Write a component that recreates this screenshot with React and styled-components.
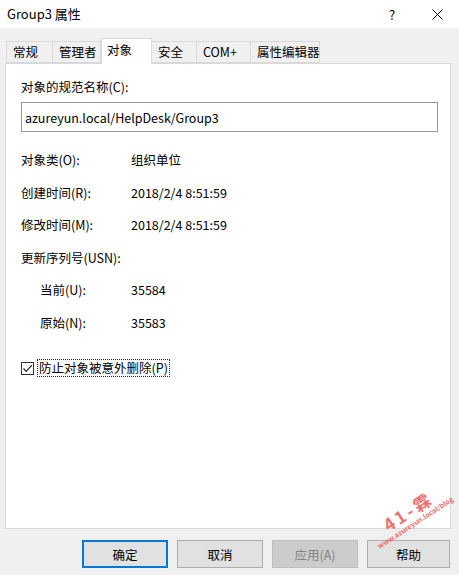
import React from "react";
import styled, { createGlobalStyle } from "styled-components";

const Global = createGlobalStyle`
  html, body { margin: 0; padding: 0; background: #f0f0f0; }
  body { font-family: "Noto Sans CJK SC", "Noto Sans", sans-serif; font-size: 12.5px; color: #000; }
  * { box-sizing: border-box; }
`;

const Window = styled.div`
  position: relative;
  width: 459px;
  height: 575px;
  background: #f0f0f0;
  display: flex;
  flex-direction: column;
  overflow: hidden;
`;

const TitleBar = styled.div`
  height: 28px;
  background: #fff;
  display: flex;
  align-items: center;
  padding-left: 7px;
`;

const Title = styled.div`
  flex: 1;
  font-size: 13px;
  line-height: 18px;
`;

const TitleButton = styled.div`
  width: ${p => p.$w}px;
  height: 28px;
  display: flex;
  align-items: center;
  justify-content: center;
  font-size: 13px;
`;

const TabStrip = styled.div`
  margin-top: 10px;
  height: 25px;
  padding-left: 6px;
  display: flex;
  align-items: flex-end;
  position: relative;
  z-index: 1;
`;

const Tab = styled.div`
  width: ${p => p.$w}px;
  height: ${p => (p.$active ? 26 : 22)}px;
  margin-bottom: ${p => (p.$active ? -1 : 0)}px;
  background: ${p => (p.$active ? "#fff" : "#f0f0f0")};
  border: 1px solid #d9d9d9;
  border-bottom: ${p => (p.$active ? "none" : "1px solid #d9d9d9")};
  border-left: ${p => (p.$first || p.$active ? "1px solid #d9d9d9" : "none")};
  padding-left: ${p => p.$pl}px;
  display: flex;
  align-items: ${p => (p.$active ? "flex-start" : "center")};
  padding-top: ${p => (p.$active ? 2 : 0)}px;
  line-height: 18px;
  white-space: nowrap;
`;

const Panel = styled.div`
  margin: 0 8px 0 5px;
  height: 466px;
  background: #fff;
  border: 1px solid #d9d9d9;
  padding: 14px 12px 0 15px;
  display: flex;
  flex-direction: column;
`;

const Label = styled.div`
  line-height: 18px;
  height: 18px;
  white-space: nowrap;
`;

const TextBox = styled.div`
  margin-top: 6px;
  height: 30px;
  border: 1px solid #9a9a9a;
  padding-left: 3px;
  display: flex;
  align-items: center;
  background: #fff;
`;

const InfoGrid = styled.div`
  margin-top: 12px;
  display: grid;
  grid-template-columns: 110px 1fr;
  grid-auto-rows: 32.5px;
  align-items: center;
`;

const Key = styled.div`
  padding-left: ${p => (p.$indent ? 19 : 0)}px;
  line-height: 18px;
  white-space: nowrap;
  grid-column: ${p => (p.$span ? "1 / 3" : "auto")};
`;

const Value = styled.div`
  line-height: 18px;
  white-space: nowrap;
`;

const CheckRow = styled.div`
  margin-top: 20px;
  display: flex;
  align-items: center;
  height: 18px;
`;

const CheckBox = styled.div`
  width: 13px;
  height: 13px;
  border: 1px solid #333;
  background: #fff;
  display: flex;
  align-items: center;
  justify-content: center;
`;

const CheckLabel = styled.div`
  margin-left: 3px;
  padding: 0 1px;
  border: 1px dotted #222;
  line-height: 16px;
  white-space: nowrap;
`;

const Footer = styled.div`
  flex: 1;
  display: flex;
  justify-content: flex-end;
  align-items: flex-start;
  padding: 11px 9px 0 0;
  gap: 9px;
`;

const Button = styled.div`
  width: ${p => p.$w || 86}px;
  height: 28px;
  display: flex;
  align-items: center;
  justify-content: center;
  background: ${p => (p.$disabled ? "#cccccc" : "#e1e1e1")};
  color: ${p => (p.$disabled ? "#838383" : "#000")};
  border: ${p => (p.$default ? "2px solid #0078d7" : p.$disabled ? "1px solid #bfbfbf" : "1px solid #adadad")};
`;

const Watermark = styled.div`
  position: absolute;
  left: 366px;
  top: 528px;
  transform: rotate(-33deg);
  transform-origin: left top;
  color: rgba(235, 70, 70, 0.8);
  display: flex;
  flex-direction: column;
  align-items: center;
  pointer-events: none;
`;

const WmBig = styled.div`
  font-size: 17px;
  font-weight: bold;
  line-height: 18px;
  letter-spacing: 3px;
`;

const WmSmall = styled.div`
  font-size: 7px;
  line-height: 8px;
  font-weight: bold;
  white-space: nowrap;
`;

const tabs = [
  { t: "常规", w: 47 },
  { t: "管理者", w: 48 },
  { t: "对象", w: 51, active: true },
  { t: "安全", w: 45 },
  { t: "COM+", w: 54 },
  { t: "属性编辑器", w: 69 },
];

export default function App() {
  return (
    <>
      <Global />
      <Window>
        <TitleBar>
          <Title>Group3 属性</Title>
          <TitleButton $w={46}>?</TitleButton>
          <TitleButton $w={44}>
            <svg width="11" height="11" viewBox="0 0 11 11">
              <path d="M0.5 0.5 L10.5 10.5 M10.5 0.5 L0.5 10.5" stroke="#000" strokeWidth="1" fill="none" />
            </svg>
          </TitleButton>
        </TitleBar>
        <TabStrip>
          {tabs.map((tab, i) => (
            <Tab key={tab.t} $w={tab.w} $active={tab.active} $first={i === 0} $pl={tab.active ? 5 : 6}>
              {tab.t}
            </Tab>
          ))}
        </TabStrip>
        <Panel>
          <Label>对象的规范名称(C):</Label>
          <TextBox>azureyun.local/HelpDesk/Group3</TextBox>
          <InfoGrid>
            <Key>对象类(O):</Key>
            <Value>组织单位</Value>
            <Key>创建时间(R):</Key>
            <Value>2018/2/4 8:51:59</Value>
            <Key>修改时间(M):</Key>
            <Value>2018/2/4 8:51:59</Value>
            <Key $span>更新序列号(USN):</Key>
            <Key $indent>当前(U):</Key>
            <Value>35584</Value>
            <Key $indent>原始(N):</Key>
            <Value>35583</Value>
          </InfoGrid>
          <CheckRow>
            <CheckBox>
              <svg width="11" height="11" viewBox="0 0 11 11">
                <path d="M1.5 5.5 L4.2 8.3 L9.8 2.2" stroke="#222" strokeWidth="1.2" fill="none" />
              </svg>
            </CheckBox>
            <CheckLabel>防止对象被意外删除(P)</CheckLabel>
          </CheckRow>
        </Panel>
        <Footer>
          <Button $default>确定</Button>
          <Button>取消</Button>
          <Button $disabled>应用(A)</Button>
          <Button $w={83}>帮助</Button>
        </Footer>
        <Watermark>
          <WmBig>41-霖</WmBig>
          <WmSmall>www.azureyun.local/blog</WmSmall>
        </Watermark>
      </Window>
    </>
  );
}
